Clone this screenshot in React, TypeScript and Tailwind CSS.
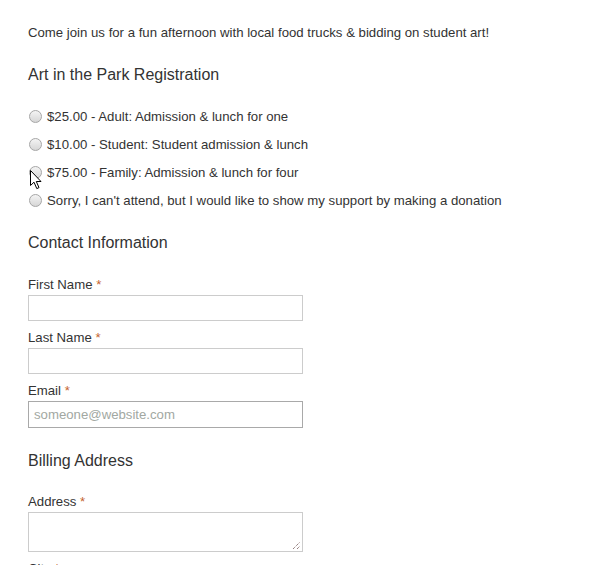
import React from "react";

function Radio({ label }: { label: string }) {
  return (
    <div className="flex h-[28px] items-center">
      <span className="ml-px mr-[5px] inline-block h-[13px] w-[13px] rounded-full border border-[#a6a6a6] bg-gradient-to-b from-[#f4f4f4] to-[#d6d6d6]" />
      <span className="pt-[2px]">{label}</span>
    </div>
  );
}

function Label({ text }: { text: string }) {
  return (
    <div className="h-[20px] leading-[22px] mb-px">
      {text} <span className="text-[#c4622d]">*</span>
    </div>
  );
}

export default function App() {
  return (
    <div
      className="relative min-h-[565px] bg-white pl-[28px] pt-[22px] text-[13.2px] text-[#333333]"
      style={{ fontFamily: '"Liberation Sans", Arial, sans-serif' }}
    >
      <p className="h-[20px] leading-[22px]">
        Come join us for a fun afternoon with local food trucks &amp; bidding on student art!
      </p>
      <h2 className="mt-[20px] h-[24px] text-[16px] leading-[26px]">Art in the Park Registration</h2>
      <div className="mt-[16px]">
        <Radio label="$25.00 - Adult: Admission & lunch for one" />
        <Radio label="$10.00 - Student: Student admission & lunch" />
        <Radio label="$75.00 - Family: Admission & lunch for four" />
        <Radio label="Sorry, I can't attend, but I would like to show my support by making a donation" />
      </div>
      <h2 className="mt-[16px] h-[24px] text-[16px] leading-[26px]">Contact Information</h2>
      <div className="mt-[20px]">
        <Label text="First Name" />
        <div className="h-[26px] w-[275px] border border-[#cccccc] bg-white" />
      </div>
      <div className="mt-[6px]">
        <Label text="Last Name" />
        <div className="h-[26px] w-[275px] border border-[#cccccc] bg-white" />
      </div>
      <div className="mt-[6px]">
        <Label text="Email" />
        <div className="flex h-[27px] w-[275px] items-center border border-[#a9a9a9] bg-white pl-[5px] text-[#a2a8a2]">
          someone@website.com
        </div>
      </div>
      <h2 className="mt-[20px] h-[24px] text-[16px] leading-[26px]">Billing Address</h2>
      <div className="mt-[19px]">
        <Label text="Address" />
        <div className="relative h-[40px] w-[275px] border border-[#cccccc] bg-white">
          <svg className="absolute bottom-[1px] right-[1px]" width="9" height="9" viewBox="0 0 9 9">
            <line x1="1" y1="8" x2="8" y2="1" stroke="#6a4b4b" strokeWidth="1" strokeDasharray="1 1" />
            <line x1="5" y1="8" x2="8" y2="5" stroke="#6a4b4b" strokeWidth="1" strokeDasharray="1 1" />
          </svg>
        </div>
      </div>
      <div className="mt-[6px]">
        <Label text="City" />
      </div>
      <svg
        className="absolute left-[30px] top-[170px]"
        width="13"
        height="20"
        viewBox="0 0 13 20"
      >
        <path
          d="M0.5 0.5 L0.5 15.5 L4 12.2 L6.8 18.6 L9 17.6 L6.3 11.5 L11 11.5 Z"
          fill="#ffffff"
          stroke="#000000"
          strokeWidth="1"
          strokeLinejoin="round"
        />
      </svg>
    </div>
  );
}
